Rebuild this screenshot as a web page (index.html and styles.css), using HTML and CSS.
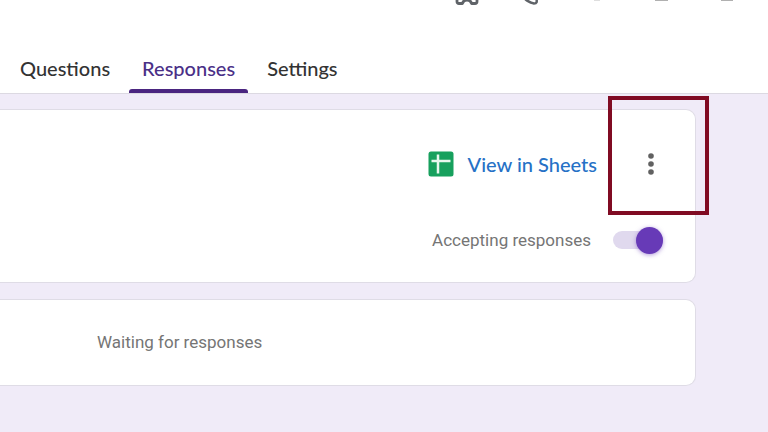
FILE: index.html
```html
<!DOCTYPE html>
<html lang="en">
<head>
  <meta charset="UTF-8" />
  <meta name="viewport" content="width=device-width, initial-scale=1" />
  <title>Form responses</title>
  <link rel="stylesheet" href="styles.css">
</head>
<body>
  <header class="header">
    <div class="toolbar">
      <button class="tool" aria-label="Add-ons">
        <svg width="24" height="6" viewBox="0 0 24 6"><path d="M2 -2V1.500Q2 3.500 4 3.500H7.500C8 1.500 9.500 0 12 0C14.500 0 16 1.500 16.500 3.500H20Q22 3.500 22 1.500V-2" fill="none" stroke="#5f6368" stroke-width="2.800" stroke-linejoin="round"/></svg>
      </button>
      <button class="tool" aria-label="Customize theme">
        <svg width="24" height="6" viewBox="0 0 24 6"><path d="M2 -4C6 0 9 3 14 3.500C17 3.500 17 1.500 16.500 -1" fill="none" stroke="#5f6368" stroke-width="2.500"/></svg>
      </button>
      <button class="tool" aria-label="Preview">
        <svg width="24" height="6" viewBox="0 0 24 6"><path d="M9 0H15" stroke="#bdbdbd" stroke-width="1"/></svg>
      </button>
      <button class="tool" aria-label="Undo">
        <svg width="24" height="6" viewBox="0 0 24 6"><path d="M5 0H18" stroke="#b0b0b0" stroke-width="2"/></svg>
      </button>
      <button class="tool" aria-label="Send">
        <svg width="24" height="6" viewBox="0 0 24 6"><path d="M6 0H18" stroke="#b0b0b0" stroke-width="2"/></svg>
      </button>
    </div>
    <nav class="tabs">
      <a class="tab" href="#questions">Questions</a>
      <a class="tab active" href="#responses" aria-current="page">Responses</a>
      <a class="tab" href="#settings">Settings</a>
    </nav>
  </header>

  <main class="content">
    <section class="card summary">
      <div class="row actions">
        <a class="sheets-link" href="#sheets">
          <svg width="26" height="26" viewBox="0 0 26 26" aria-hidden="true">
            <rect x="0.500" y="0.500" width="25" height="25" rx="2.500" fill="#17a05d"/>
            <path d="M3.500 10H22.500M10 3.500V22.500" stroke="#e8f7ee" stroke-width="2.500"/>
          </svg>
          View in Sheets
        </a>
        <div class="menu">
          <button class="menu-btn" aria-label="More options">
            <svg width="24" height="24" viewBox="0 0 24 24" fill="#616161"><circle cx="12" cy="4" r="2.800"/><circle cx="12" cy="12" r="2.800"/><circle cx="12" cy="20" r="2.800"/></svg>
          </button>
          <div class="highlight"></div>
        </div>
      </div>
      <div class="row accepting">
        <label for="accepting">Accepting responses</label>
        <input class="switch" type="checkbox" role="switch" id="accepting" checked>
      </div>
    </section>

    <section class="card waiting">
      <p>Waiting for responses</p>
    </section>
  </main>
</body>
</html>
```
FILE: styles.css
```css
* {
  box-sizing: border-box;
}
body {
  margin: 0;
  min-height: 100vh;
  background: #f0ebf8;
  font-family: Roboto, "Liberation Sans", sans-serif;
  color: #757575;
}
button {
  border: none;
  background: none;
  padding: 0;
  cursor: pointer;
}
svg {
  display: block;
}

/* Header */
.header {
  background: #fff;
  border-bottom: 1px solid #dcd9e2;
}
.toolbar {
  display: flex;
  justify-content: flex-end;
  gap: 41px;
  padding-right: 29px;
}
.tabs {
  display: flex;
  gap: 6px;
  padding: 38px 7px 0;
}
.tab {
  position: relative;
  padding: 12px 13px 13px;
  color: #333;
  font-family: Lato, sans-serif;
  font-size: 20px;
  font-weight: 500;
  line-height: 24px;
  text-decoration: none;
}
.tab.active {
  color: #4a2f87;
}
.tab.active::after {
  content: "";
  position: absolute;
  left: 0;
  right: 0;
  bottom: 0;
  height: 4px;
  border-radius: 3px 3px 0 0;
  background: #4a2580;
}

/* Cards */
.content {
  display: flex;
  flex-direction: column;
  gap: 16px;
  padding: 15px 72px 0 0;
}
.card {
  background: #fff;
  border: 1px solid #dfdce6;
  border-left: none;
  border-radius: 0 10px 10px 0;
}
.summary {
  display: flex;
  flex-direction: column;
  gap: 40px;
  padding: 34px 32px 26px;
}
.row {
  display: flex;
  align-items: center;
  justify-content: flex-end;
}
.actions {
  gap: 42px;
}
.sheets-link {
  display: flex;
  align-items: center;
  gap: 14px;
  color: #2671c6;
  font-family: Lato, sans-serif;
  font-size: 20px;
  font-weight: 500;
  line-height: 40px;
  text-decoration: none;
}
.menu {
  display: flex;
  position: relative;
}
.highlight {
  position: absolute;
  top: -56px;
  left: -31px;
  width: 101px;
  height: 119px;
  border: 4px solid #800b23;
  pointer-events: none;
}
.accepting {
  gap: 22px;
  font-size: 17px;
  line-height: 32px;
}

/* Toggle */
.switch {
  appearance: none;
  display: flex;
  align-items: center;
  justify-content: flex-end;
  width: 50px;
  height: 18px;
  margin: 0;
  border-radius: 9px;
  background: #e0d9ee;
  cursor: pointer;
}
.switch::before {
  content: "";
  width: 27px;
  height: 27px;
  border-radius: 50%;
  background: #673ab7;
  box-shadow: 0 1px 4px rgba(103, 58, 183, 0.5);
}
.switch:not(:checked) {
  justify-content: flex-start;
}

.waiting {
  padding: 26px 97px 27px;
}
.waiting p {
  margin: 0;
  font-size: 17px;
  line-height: 32px;
}
```
